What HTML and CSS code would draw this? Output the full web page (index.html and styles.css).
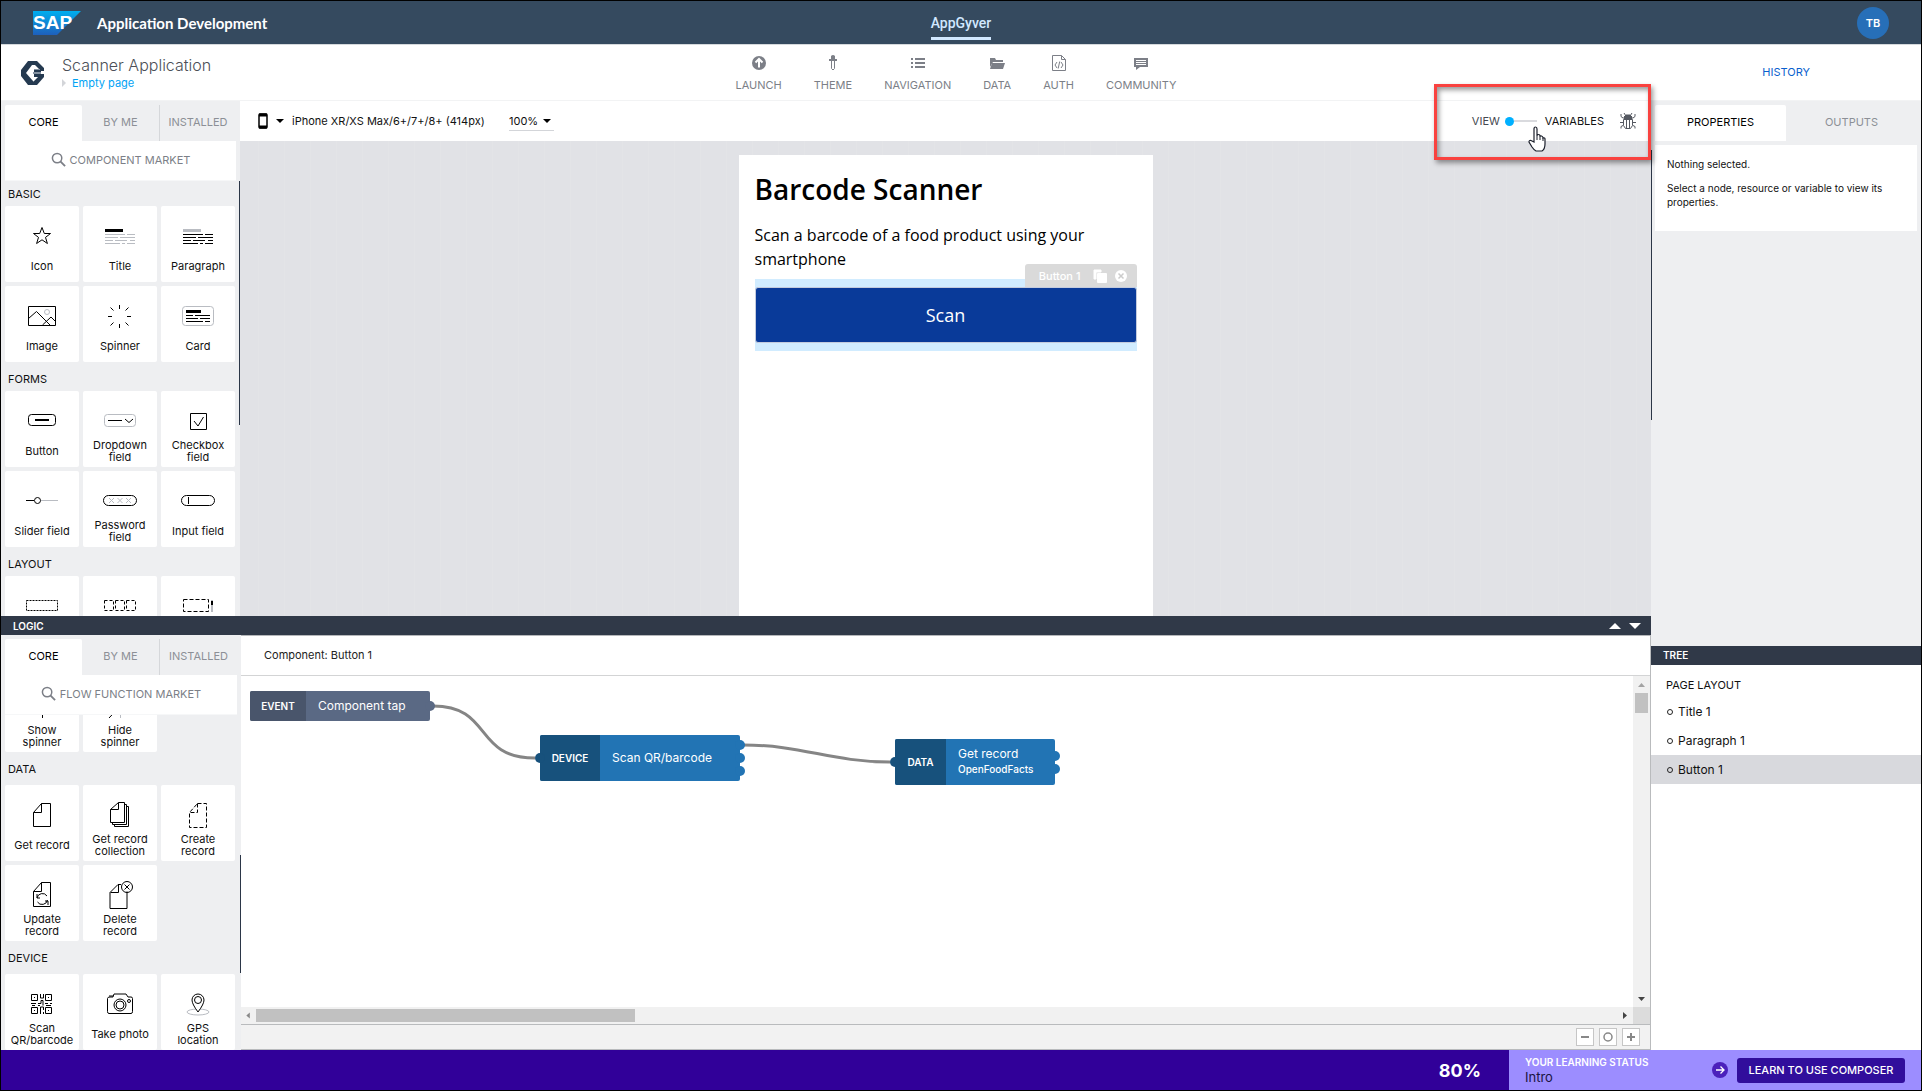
FILE: index.html
```html
<!DOCTYPE html>
<html lang="en">
<head>
<meta charset="utf-8">
<title>Application Development</title>
<link rel="stylesheet" href="styles.css">
</head>
<body>
<div class="app">
  <header class="shell">
    <div class="shell-brand">
      <svg class="sap" viewBox="0 0 48 24" role="img" aria-label="SAP">
        <defs><linearGradient id="sapfill" x1="0" y1="0" x2="0" y2="1"><stop offset="0" stop-color="#00aeef"/><stop offset="1" stop-color="#1e5fbb"/></linearGradient></defs>
        <path d="M0 0H48L24 24H0z" fill="url(#sapfill)"/>
        <text x="0" y="18" class="sap-text">SAP</text>
      </svg>
      <span class="shell-title">Application Development</span>
    </div>
    <a class="shell-tab" href="#">AppGyver</a>
    <div class="shell-user"><button class="avatar">TB</button></div>
  </header>

  <div class="appbar">
    <div class="project">
      <svg class="gyver" viewBox="0 0 24 24"><path d="M7 0h9l7 7v3h-5v-2l-4-4h-3L5 12l7 8 3 4H7L0 15V9z" fill="#253a50"/><path d="M12 24h4l7-8v-3h-5v2l-6 6z" fill="#253a50"/><path d="M13 8h6v1h-6zM12 11h8v2h-8z" fill="#8492a1"/><path d="M13 9h7v2h-7zM13 13h10v3h-10z" fill="#253a50"/></svg>
      <div class="project-text">
        <h1>Scanner Application</h1>
        <a href="#"><svg viewBox="0 0 4 8"><path d="M0 0l4 4-4 4z" fill="#d3d5d9"/></svg>Empty page</a>
      </div>
    </div>
    <nav class="mainnav">
      <a href="#"><svg viewBox="0 0 20 20"><circle cx="10" cy="10" r="7" fill="#7c7f87"/><path d="M10 14.500V6.500M6.500 9.500L10 6l3.500 3.500" fill="none" stroke="#fff" stroke-width="2"/></svg>LAUNCH</a>
      <a href="#"><svg viewBox="0 0 20 20"><path d="M8 3q2-2 4 0v3h2v2H6V6h2z" fill="#7c7f87"/><path d="M8.500 8v7.500q1.500 3 3 0V8" fill="none" stroke="#7c7f87"/></svg>THEME</a>
      <a href="#"><svg viewBox="0 0 20 20"><path d="M3 5h2v2H3zM7 5h10v2H7zM3 9h2v2H3zM7 9h10v2H7zM3 13h2v2H3zM7 13h10v2H7z" fill="#7c7f87"/></svg>NAVIGATION</a>
      <a href="#"><svg viewBox="0 0 20 20"><path d="M3 5h5l1 2h7v2H6l-3 5z" fill="#7c7f87"/><path d="M5 10h13l-2 6H3z" fill="#7c7f87"/></svg>DATA</a>
      <a href="#"><svg viewBox="0 0 20 20" fill="none" stroke="#7c7f87"><path d="M3.500 2.500h9l4 4v11h-13zM12.500 2.500v4h4"/><path d="M8 9l-2 3 2 3M12 9l2 3-2 3M10.700 8.500l-1.500 7"/></svg>AUTH</a>
      <a href="#"><svg viewBox="0 0 20 20"><path d="M3 5h14v9H9l-4 3v-3H3z" fill="#7c7f87"/><path d="M5 7.500h10M5 9.500h10M5 11.500h10" stroke="#fff"/></svg>COMMUNITY</a>
    </nav>
    <div class="history"><a href="#">HISTORY</a></div>
  </div>

  <div class="workspace">
    <div class="editor">
      <div class="upper">
        <aside class="palette">
          <div class="tabs"><button class="tab active">CORE</button><button class="tab">BY ME</button><button class="tab">INSTALLED</button></div>
          <button class="market"><svg viewBox="0 0 16 16"><circle cx="6.500" cy="6.500" r="5" fill="none" stroke="#7c7f87" stroke-width="1.600"/><path d="M10 10l5 5" stroke="#7c7f87" stroke-width="2"/></svg>COMPONENT MARKET</button>
          <div class="list">
            <section><h2>BASIC</h2>
              <div class="cards">
                <div class="card"><svg viewBox="0 0 36 36"><path d="M18 9.500l2.300 6h6.200l-5 3.900 1.900 6.100-5.400-3.700-5.400 3.700 1.900-6.100-5-3.900h6.200z"/></svg><span>Icon</span></div>
                <div class="card"><svg viewBox="0 0 36 36"><path d="M3 12.500h18" stroke-width="3"/><path class="g" d="M3 16.500h20m2 0h8M3 19.500h13m2 0h15M3 22.500h8m2 0h12m3 0h5M3 25.500h15m2 0h3m2 0h8"/></svg><span>Title</span></div>
                <div class="card"><svg viewBox="0 0 36 36"><path class="g" d="M3 12.500h18" stroke-width="3"/><path d="M3 16.500h20m2 0h8M3 19.500h13m2 0h15M3 22.500h8m2 0h12m3 0h5M3 25.500h15m2 0h3m2 0h8"/></svg><span>Paragraph</span></div>
                <div class="card"><svg viewBox="0 0 36 36"><path d="M4.500 8.500h27v19h-27zM4.500 20.500l8-7 14 14M18.500 27l8.500-8 4 4"/><circle class="g" cx="23" cy="14" r="2.500"/></svg><span>Image</span></div>
                <div class="card"><svg viewBox="0 0 36 36"><path d="M17.500 7v4M17.500 26v4M6 18.500h4M25 18.500h4M8.500 9.500l3 3M23.500 24.500l3 3M26.500 9.500l-3 3M11.500 24.500l-3 3"/></svg><span>Spinner</span></div>
                <div class="card"><svg viewBox="0 0 36 36"><rect class="g" x="2.500" y="8.500" width="31" height="19" rx="3"/><path d="M6 13.500h15" stroke-width="3"/><path d="M6 17.500h7m2 0h15M6 20.500h12m2 0h10M6 23.500h17m2 0h5"/></svg><span>Card</span></div>
              </div></section>
            <section><h2>FORMS</h2>
              <div class="cards">
                <div class="card"><svg viewBox="0 0 36 36"><rect x="4.500" y="11.500" width="27" height="11" rx="3"/><path d="M11 17h14" stroke-width="2"/></svg><span>Button</span></div>
                <div class="card"><svg viewBox="0 0 36 36"><rect class="g" x="2.500" y="11.500" width="31" height="12" rx="3"/><path d="M6 17.500h14M23 16l4 3.500 4-3.500"/></svg><span>Dropdown field</span></div>
                <div class="card"><svg viewBox="0 0 36 36"><path d="M10.500 10.500h16v16h-16zM14 18l4 5 5.500-9"/></svg><span>Checkbox field</span></div>
                <div class="card"><svg viewBox="0 0 36 36"><path d="M2 17.500h8"/><circle cx="13.500" cy="17.500" r="3"/><path class="g" d="M17 17.500h17"/></svg><span>Slider field</span></div>
                <div class="card"><svg viewBox="0 0 36 36"><rect x="1.500" y="12.500" width="33" height="10" rx="5"/><path class="g" d="M7 15l5 5m0-5l-5 5M15.500 15l5 5m0-5l-5 5M24 15l5 5m0-5l-5 5"/></svg><span>Password field</span></div>
                <div class="card"><svg viewBox="0 0 36 36"><rect x="1.500" y="12.500" width="33" height="10" rx="5"/><path d="M8.500 14v7"/></svg><span>Input field</span></div>
              </div></section>
            <section><h2>LAYOUT</h2>
              <div class="cards">
                <div class="card"><svg viewBox="0 0 36 36" stroke-dasharray="2 1"><path d="M2.500 12.500h31v10h-31z"/></svg></div>
                <div class="card"><svg viewBox="0 0 36 36" stroke-dasharray="3 2"><path d="M2.500 12.500h9v10h-9zM13.500 12.500h9v10h-9zM24.500 12.500h9v10h-9z"/></svg></div>
                <div class="card"><svg viewBox="0 0 36 36"><path d="M3.500 11.500h25v12h-25z" stroke-dasharray="4 2"/><path class="g" d="M32 12v12" stroke-width="2"/><path d="M32 13v4" stroke-width="2"/></svg></div>
              </div></section>
          </div>
          <i class="thumb thumb-upper"></i>
        </aside>

        <main class="stage">
          <div class="toolbar">
            <svg class="phone-icon" viewBox="0 0 10 16"><rect x="1" y="1" width="8" height="14" rx="1" fill="none" stroke="#000" stroke-width="1.500"/><path d="M1 2h8M1 14h8" stroke="#000" stroke-width="3"/></svg>
            <svg class="caret" viewBox="0 0 8 4"><path d="M0 0h8L4 4z"/></svg>
            <select class="device" aria-label="Device"><option>iPhone XR/XS Max/6+/7+/8+ (414px)</option></select>
            <div class="zoom"><select aria-label="Zoom"><option>100%</option></select><svg class="caret" viewBox="0 0 8 4"><path d="M0 0h8L4 4z"/></svg></div>
            <label class="mode"><span class="mode-view">VIEW</span><input type="checkbox"><span>VARIABLES</span></label>
            <button class="bug" aria-label="Debug"><svg viewBox="0 0 18 18" fill="none" stroke="#555961"><path d="M5 1l2 3M13 1l-2 3M4 6L2 4.500V2M14 6l2-1.500V2M4 10.500H1M14 10.500h3M4 13.500l-2 1v2M14 13.500l2 1v2M4.500 7.500v6l2 3h5l2-3v-6zM7.500 8v8M10.500 8v8"/><path d="M5 7V5l2-2h4l2 2v2z" fill="#555961"/></svg></button>
          </div>
          <div class="board">
            <div class="device-page">
              <h2>Barcode Scanner</h2>
              <p>Scan a barcode of a food product using your smartphone</p>
              <div class="selected">
                <div class="badge">Button 1
                  <svg viewBox="0 0 14 14"><path d="M1 1h7v2H3v7H1z" fill="#fff" stroke="#fff"/><rect x="4" y="4" width="10" height="10" rx="1" fill="#fff"/></svg>
                  <svg viewBox="0 0 14 14"><circle cx="7" cy="7" r="6" fill="#fff"/><path d="M4.500 4.500l5 5m0-5l-5 5" stroke="#ccc" stroke-width="1.500"/></svg>
                </div>
                <button class="scan">Scan</button>
              </div>
            </div>
          </div>
        </main>
      </div>

      <section class="logic">
        <div class="logicbar"><span>LOGIC</span>
          <button aria-label="Expand"><svg viewBox="0 0 12 6"><path d="M0 6h12L6 0z"/></svg></button>
          <button aria-label="Collapse"><svg viewBox="0 0 12 6"><path d="M0 0h12L6 6z"/></svg></button>
        </div>
        <div class="lower">
          <aside class="palette">
            <div class="tabs"><button class="tab active">CORE</button><button class="tab">BY ME</button><button class="tab">INSTALLED</button></div>
            <button class="market"><svg viewBox="0 0 16 16"><circle cx="6.500" cy="6.500" r="5" fill="none" stroke="#7c7f87" stroke-width="1.600"/><path d="M10 10l5 5" stroke="#7c7f87" stroke-width="2"/></svg>FLOW FUNCTION MARKET</button>
            <div class="list scrolled">
              <section>
                <div class="cards">
                  <div class="card"><svg viewBox="0 0 36 36"><path d="M18.500 7v4M18.500 26v4M7 18.500h4M26 18.500h4"/></svg><span>Show<br>spinner</span></div>
                  <div class="card"><svg viewBox="0 0 36 36"><path class="g" d="M18.500 7v4M18.500 26v4M7 18.500h4M26 18.500h4"/><path d="M27 9L7 30"/></svg><span>Hide<br>spinner</span></div>
                </div></section>
              <section><h2>DATA</h2>
                <div class="cards">
                  <div class="card"><svg viewBox="0 0 36 36"><path d="M17.500 6.500h9v23h-17v-14zM17.500 6.500v9h-8"/></svg><span>Get record</span></div>
                  <div class="card"><svg viewBox="0 0 36 36"><path d="M16.500 5.500h6v20h-14v-13zM16.500 5.500v7h-8M22.500 7.500h2v20h-14v-2M24.500 9.500h2v20h-14v-2"/></svg><span>Get record collection</span></div>
                  <div class="card"><svg viewBox="0 0 36 36" stroke-dasharray="4 2"><path d="M17.500 6.500h9v24h-17v-15zM17.500 6.500v9h-8"/></svg><span>Create record</span></div>
                  <div class="card"><svg viewBox="0 0 36 36"><path d="M17.500 5.500h9v24h-17v-15zM17.500 5.500v9h-8"/><path d="M13 21a5.500 5.500 0 0 1 10-2M13 17v4h3M23.500 23a5.500 5.500 0 0 1-10 2M24 28v-4h-3"/></svg><span>Update record</span></div>
                  <div class="card"><svg viewBox="0 0 36 36"><path d="M19 7.500h-3l-8 8v16h17v-17M16.500 7.500v8h-8"/><circle cx="25" cy="10" r="5.500"/><path d="M22.500 7.500l5 5m0-5l-5 5"/></svg><span>Delete record</span></div>
                </div></section>
              <section><h2>DEVICE</h2>
                <div class="cards">
                  <div class="card"><svg viewBox="0 0 36 36"><path d="M7.500 8.500h6v6h-6zM21.500 8.500h6v6h-6zM7.500 21.500h6v6h-6zM21.500 21.500h6v6h-6zM10 11.500h1M24 11.500h1M10 24.500h1M24 24.500h1M16.500 8v4h3V8M7 17.500h5m2 0h3v-3h2v5M21 17.500h3m2 0h2M16.500 28v-7h3v3m0 2v2M8 19.500h3m3 0h2M22 19.500h5"/></svg><span>Scan QR/barcode</span></div>
                  <div class="card"><svg viewBox="0 0 36 36"><path d="M8 11h3l1-3h12l2 3h3q1.500 0 1.500 1.500v13q0 2-1.500 2H7q-1.500 0-1.500-2v-13Q5.500 11 8 11zM7 10h4"/><circle cx="18" cy="19" r="6"/><circle cx="18" cy="19" r="4"/><circle cx="27" cy="15" r="1.500"/></svg><span>Take photo</span></div>
                  <div class="card"><svg viewBox="0 0 36 36"><ellipse class="g" cx="18" cy="26" rx="11" ry="3"/><path d="M18 26q-6-8-6-12a6 6 0 0 1 12 0q0 4-6 12z" fill="#fff"/><circle cx="18" cy="14" r="3.500"/></svg><span>GPS<br>location</span></div>
                </div></section>
            </div>
            <i class="thumb thumb-lower"></i>
          </aside>

          <div class="flow">
            <div class="flow-title">Component: Button 1</div>
            <div class="flow-canvas">
              <svg class="wires" viewBox="0 0 840 331"><path d="M192 30C252 30 232 82 294 82M502 69C562 69 590 86 649 86"/></svg>
              <div class="node event"><b>EVENT</b><span>Component tap</span><div class="ports out"><i></i></div></div>
              <div class="node scanqr"><b>DEVICE</b><span>Scan QR/barcode</span><div class="ports in"><i></i></div><div class="ports out"><i></i><i></i><i></i></div></div>
              <div class="node getrec"><b>DATA</b><span>Get record<small>OpenFoodFacts</small></span><div class="ports in"><i></i></div><div class="ports out"><i></i><i></i></div></div>
            </div>
            <div class="vbar"><svg viewBox="0 0 17 17"><path d="M5 11h7L8.500 7z" fill="#a3a3a3"/></svg><i></i><svg viewBox="0 0 17 17"><path d="M5 7h7l-3.500 4z" fill="#444"/></svg></div>
            <div class="hbar"><svg viewBox="0 0 17 17"><path d="M10 5v7L6 8.500z" fill="#888"/></svg><i></i><svg viewBox="0 0 17 17"><path d="M7 5v7l4-3.500z" fill="#444"/></svg></div>
            <div class="corner"></div>
            <div class="flow-zoom">
              <button aria-label="Zoom out"><svg viewBox="0 0 16 16"><path d="M4 8h8" stroke-width="2"/></svg></button>
              <button aria-label="Reset zoom"><svg viewBox="0 0 16 16"><circle cx="8" cy="8" r="4" stroke-width="1.500"/></svg></button>
              <button aria-label="Zoom in"><svg viewBox="0 0 16 16"><path d="M4 8h8M8 4v8" stroke-width="2"/></svg></button>
            </div>
          </div>
        </div>
      </section>
    </div>

    <aside class="inspector">
      <div class="tabs"><button class="tab active">PROPERTIES</button><button class="tab">OUTPUTS</button></div>
      <div class="props"><p>Nothing selected.</p><p>Select a node, resource or variable to view its properties.</p></div>
      <div class="tree">
        <div class="treebar">TREE</div>
        <h3>PAGE LAYOUT</h3>
        <ul><li>Title 1</li><li>Paragraph 1</li><li class="current">Button 1</li></ul>
      </div>
      <i class="thumb thumb-right"></i>
    </aside>
  </div>

  <footer class="status">
    <strong>80%</strong>
    <div class="learning">
      <div class="learning-text"><b>YOUR LEARNING STATUS</b><span>Intro</span></div>
      <svg viewBox="0 0 16 16"><circle cx="8" cy="8" r="8" fill="#4b20bb"/><path d="M4 8h8M8.500 4.500L12 8l-3.500 3.500" fill="none" stroke="#fff" stroke-width="1.300"/></svg>
      <button>LEARN TO USE COMPOSER</button>
    </div>
  </footer>

  <div class="callout"></div>
  <svg class="pointer" viewBox="0 0 18 26"><path d="M6 16V3q0-2 1.500-2T9 3v7q0-1.500 1.500-1.500T12 10v1q0-1.500 1.500-1T15 12q2-.5 2 1v5q0 5-3 7H8q-2-1-4-4l-3-5q0-2 2-1.500z" fill="#fff" stroke="#1b1f2b" stroke-width="1.200"/><path d="M9 10v4M12 11v3M15 12v3" stroke="#1b1f2b"/></svg>
</div>
</body>
</html>
```
FILE: styles.css
```css
* { box-sizing: border-box; }
body { margin: 0; font-family: Inter, "Liberation Sans", sans-serif; font-size: 11px; color: #111; }
h1, h2, h3, p, ul { margin: 0; padding: 0; font-weight: 400; }
a { text-decoration: none; color: inherit; }
button, select, input { font: inherit; color: inherit; border: 0; margin: 0; padding: 0; background: none; }
svg { display: block; flex: none; }

.app { position: relative; display: flex; flex-direction: column; height: 100vh; border: 1px solid #000; background: #fff; overflow: hidden; }

.shell { display: grid; grid-template-columns: 1fr auto 1fr; height: 44px; align-items: stretch; background: #354a5f; border-bottom: 1px solid #d5d9dc; }
.shell-brand { display: flex; align-items: center; gap: 16px; padding-left: 32px; }
.sap { width: 48px; height: 24px; }
.sap-text { font: bold 19px "Liberation Sans", sans-serif; fill: #fff; }
.shell-title { font: 700 15px Lato, sans-serif; color: #fff; }
.shell-tab { display: flex; align-items: center; margin-bottom: 4px; padding-top: 7px; border-bottom: 3px solid #d1e8ff; font: 500 14px Roboto, sans-serif; color: #d1e8ff; }
.shell-user { display: flex; align-items: center; justify-content: flex-end; padding-right: 32px; }
.avatar { width: 32px; height: 32px; border-radius: 50%; background: #276fb8; color: #fff; font-weight: 600; }

.appbar { display: grid; grid-template-columns: 1fr auto 1fr; height: 56px; border-bottom: 1px solid #f2f3f4; }
.project { display: flex; align-items: center; gap: 17px; padding-left: 20px; }
.gyver { width: 24px; height: 24px; }
.project-text h1 { font: 300 16px/20px Inter, sans-serif; color: #4c4f57; }
.project-text a { display: flex; align-items: center; gap: 6px; line-height: 16px; color: #00a3f5; }
.project-text a svg { width: 4px; height: 8px; }
.mainnav { display: flex; gap: 32px; padding-right: 10px; }
.mainnav a { display: flex; flex-direction: column; align-items: center; padding-top: 8px; gap: 4px; line-height: 16px; color: #7c7f87; }
.mainnav svg { width: 20px; height: 20px; }
.history { display: flex; align-items: center; justify-content: flex-end; padding: 0 111px 2px 0; color: #0a5fce; }

.workspace { flex: 1; min-height: 0; display: grid; grid-template-columns: minmax(0, 1fr) 270px; }
.editor { display: flex; flex-direction: column; min-height: 0; }
.upper { flex: 1; min-height: 0; display: grid; grid-template-columns: 239px minmax(0, 1fr); }

.palette { position: relative; display: flex; flex-direction: column; min-height: 0; background: #eeeff1; padding-left: 4px; overflow: hidden; }
.tabs { display: grid; grid-template-columns: 77px 77px minmax(0, 1fr); flex: none; height: 40px; padding-top: 4px; }
.tab { padding-bottom: 2px; color: #8c8f96; }
.tab.active { background: #fff; color: #000; border-radius: 2px 2px 0 0; }
.palette .tab:last-child { padding-right: 4px; border-left: 1px solid #d5d7da; }
.market { display: flex; flex: none; align-items: center; justify-content: center; gap: 4px; height: 40px; margin-right: 4px; padding-bottom: 2px; background: #fff; border-bottom: 1px solid #f6f7f8; color: #7c7f87; }
.market svg { width: 15px; height: 15px; }
.list { flex: 1; min-height: 0; overflow: hidden; }
.list section + section { margin-top: 4px; }
.list h2 { padding: 2px 0 0 3px; font-size: 11px; line-height: 23px; }
.cards { display: grid; grid-template-columns: repeat(3, 74px); gap: 4px; }
.card { height: 76px; padding-top: 12px; display: flex; flex-direction: column; align-items: center; background: #fff; border-radius: 2px; text-align: center; }
.card svg { width: 36px; height: 36px; fill: none; stroke: #000; }
.card .g { stroke: #b9bcc2; }
.card span { display: flex; align-items: center; height: 24px; padding: 0 6px; line-height: 12px; }
.scrolled section:first-child { margin-top: -39px; }
.scrolled h2 { margin-bottom: 4px; }
.thumb { position: absolute; width: 1px; background: #2b3647; }
.thumb-upper { right: 0; top: 80px; height: 244px; }
.thumb-lower { right: 0; top: 220px; height: 118px; }
.thumb-right { left: 0; top: 49px; height: 270px; }

.stage { display: flex; flex-direction: column; min-width: 0; min-height: 0; }
.toolbar { display: flex; align-items: center; flex: none; height: 40px; padding: 0 14px 0 18px; }
select { appearance: none; }
.phone-icon { width: 10px; height: 16px; }
.caret { width: 8px; height: 4px; }
.toolbar > .caret { margin: 0 8px; }
.zoom { display: flex; align-items: center; gap: 4px; height: 20px; margin-left: 24px; padding-right: 3px; border-bottom: 1px solid #d3d5d9; }
.mode { display: flex; align-items: center; gap: 5px; margin-left: auto; }
.mode .mode-view { color: #444850; }
.mode input { appearance: none; display: flex; align-items: center; width: 32px; height: 10px; margin-right: 3px; }
.mode input::before { content: ""; width: 9px; height: 9px; border-radius: 50%; background: #00b0ff; }
.mode input::after { content: ""; flex: 1; height: 2px; background: #d9dade; }
.bug { margin-left: 15px; }
.bug svg { width: 18px; height: 18px; }
.board { flex: 1; min-height: 0; display: flex; justify-content: center; padding-top: 14px; overflow: hidden; background: #e1e2e6 linear-gradient(90deg, #e3e4e7 1px, transparent 1px) 18px 0 / 26px 26px; }
.device-page { width: 414px; padding: 16px; background: #fff; font-family: "Open Sans", sans-serif; color: #000; }
.device-page h2 { font-size: 28px; line-height: 36px; font-weight: 600; }
.device-page p { margin: 16px 0 8px; font-size: 16px; line-height: 24px; }
.selected { position: relative; padding: 8px 0; background: #d1ecff; }
.scan { display: block; width: 100%; height: 56px; border: 1px solid #c4cbdd; border-radius: 3px; background: #093a99; color: #fff; font-size: 18px; font-weight: 500; }
.badge { position: absolute; right: 0; top: -15px; display: flex; align-items: center; gap: 7px; height: 23px; padding: 0 9px 0 14px; background: #dadada; border-radius: 3px 3px 0 0; color: #fff; font: 500 11px Inter, sans-serif; }
.badge svg { width: 14px; height: 14px; }
.badge svg:first-of-type { margin-left: 5px; }

.logic { flex: none; height: 434px; display: flex; flex-direction: column; }
.logicbar { display: flex; align-items: center; flex: none; gap: 8px; height: 19px; padding: 0 10px 0 12px; background: #303948; color: #fff; font-size: 10px; font-weight: 600; }
.logicbar span { margin-right: auto; }
.logicbar svg { width: 12px; height: 6px; fill: #fff; }
.lower { flex: 1; min-height: 0; display: grid; grid-template-columns: 240px minmax(0, 1fr); }
.flow { display: grid; grid-template-columns: minmax(0, 1fr) 17px; grid-template-rows: 40px minmax(0, 1fr) 17px 26px; border-top: 1px solid #b5b7ba; border-right: 1px solid #b9bbbd; min-height: 0; }
.flow-title { grid-column: 1 / 3; padding-left: 23px; line-height: 39px; color: #222; border-bottom: 1px solid #d3d4d5; }
.flow-canvas { position: relative; overflow: hidden; }
.wires { position: absolute; left: 0; top: 0; width: 840px; height: 331px; fill: none; stroke: #858585; stroke-width: 3; }
.node { position: absolute; display: flex; border-radius: 2px; color: #fff; font-size: 12px; background: var(--body); }
.node b { display: flex; align-items: center; justify-content: center; background: var(--head); border-radius: 2px 0 0 2px; font-size: 10px; font-weight: 600; }
.node span { display: flex; flex-direction: column; justify-content: center; padding: 0 0 2px 12px; }
.node small { font-size: 10px; line-height: 16px; font-weight: 500; }
.event { --head: #49556b; --body: #5a6984; left: 9px; top: 15px; width: 180px; height: 30px; }
.event b { width: 56px; }
.scanqr { --head: #17517c; --body: #2274b4; left: 299px; top: 59px; width: 200px; height: 46px; }
.scanqr b { width: 60px; }
.getrec { --head: #17517c; --body: #2274b4; left: 654px; top: 63px; width: 160px; height: 46px; }
.getrec b { width: 51px; }
.ports { position: absolute; top: 0; bottom: 0; display: flex; flex-direction: column; justify-content: center; gap: 3px; }
.ports i { width: 10px; height: 10px; border-radius: 50%; background: var(--body); }
.ports.in { left: -5px; }
.ports.in i { background: var(--head); }
.ports.out { right: -5px; }
.vbar { display: flex; flex-direction: column; background: #f1f1f1; }
.vbar i { width: 13px; height: 20px; margin: 0 2px auto; background: #c1c1c1; }
.hbar { display: flex; background: #f1f1f1; }
.hbar i { width: 379px; height: 13px; margin: 2px auto 2px 0; background: #c1c1c1; }
.vbar svg, .hbar svg { width: 17px; height: 17px; }
.hbar svg:first-child { width: 15px; }
.corner { background: #dcdcdc; }
.flow-zoom { grid-column: 1 / 3; display: flex; align-items: center; justify-content: flex-end; gap: 5px; padding-right: 10px; background: #f2f2f2; border-top: 1px solid #b9bbbd; border-bottom: 1px solid #b9bbbd; }
.flow-zoom button { border: 1px solid #c6c6c6; background: #fff; }
.flow-zoom svg { width: 16px; height: 16px; fill: none; stroke: #888; }

.inspector { position: relative; display: flex; flex-direction: column; min-height: 0; background: #eeeff1; }
.inspector .tabs { grid-template-columns: 1fr 1fr; padding-left: 4px; padding-right: 4px; }
.props { margin: 4px 4px 0; height: 86px; padding: 12px; background: #fff; font-size: 10px; line-height: 14px; }
.props p + p { margin-top: 10px; }
.tree { height: 404px; margin-top: auto; background: #fff; }
.treebar { height: 19px; padding-left: 12px; line-height: 19px; background: #303948; color: #fff; font-size: 10px; font-weight: 600; }
.tree h3 { margin-top: 6px; padding-left: 15px; font-size: 11px; line-height: 28px; }
.tree ul { list-style: none; font-size: 12px; }
.tree li { display: flex; align-items: center; gap: 5px; height: 29px; padding-left: 16px; }
.tree li::before { content: ""; width: 4px; height: 4px; border: 1px solid #222; border-radius: 50%; }
.tree h3 + ul { margin-top: -2px; }
.current { background: #d8d9dd; }

.status { display: flex; flex: none; height: 40px; background: #310099; color: #fff; align-items: center; justify-content: flex-end; }
.status strong { margin-right: 28px; font: 700 18px Inter, sans-serif; }
.learning { display: flex; align-items: center; height: 40px; width: 412px; padding: 0 16px; background: #9c8dff; }
.learning-text { display: flex; flex-direction: column; margin-right: auto; line-height: 15px; }
.learning-text b { font-size: 10px; font-weight: 600; }
.learning-text span { font-size: 13px; color: #1a1440; }
.learning svg { width: 16px; height: 16px; }
.learning button { width: 168px; height: 25px; margin-left: 9px; border-radius: 3px; background: #310e9c; color: #fff; font-weight: 500; }

.callout { position: absolute; right: 270px; top: 83px; width: 217px; height: 76px; border: 3px solid #f9423f; box-shadow: 2px 3px 5px #0006, inset 2px 3px 5px #0006; pointer-events: none; }
.pointer { position: absolute; right: 375px; top: 125px; width: 18px; height: 26px; }
```
